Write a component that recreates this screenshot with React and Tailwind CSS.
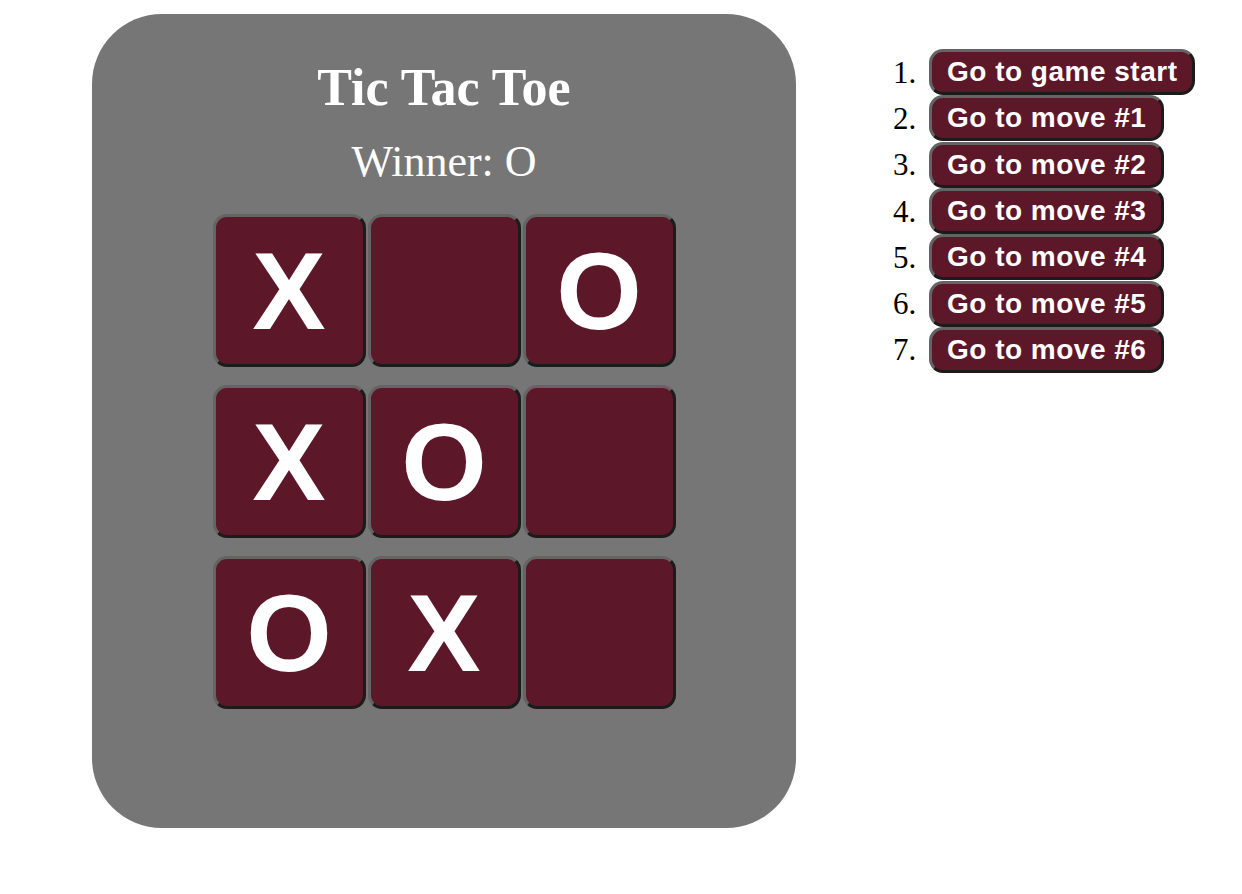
import React from 'react';

const board = ['X', null, 'O', 'X', 'O', null, 'O', 'X', null];
const moves = ['Go to game start', 'Go to move #1', 'Go to move #2', 'Go to move #3', 'Go to move #4', 'Go to move #5', 'Go to move #6'];

function Square({ value }) {
  return (
    <button className="w-[153px] h-[153px] rounded-[14px] bg-[#5c1729] border-[3px] border-t-[#646464] border-l-[#646464] border-b-[#1b1b1b] border-r-[#1b1b1b] flex items-center justify-center text-white font-bold text-[110px] leading-none font-['Liberation_Sans',Arial,sans-serif]">
      {value}
    </button>
  );
}

export default function App() {
  const rows = [board.slice(0, 3), board.slice(3, 6), board.slice(6, 9)];

  return (
    <div className="flex items-start pl-[92px] pt-[14px] gap-[97px] bg-white min-h-[894px] font-['Liberation_Serif','Times_New_Roman',serif]">
      {/* Game panel */}
      <div className="w-[704px] h-[814px] rounded-[70px] bg-[#767676] flex flex-col items-center text-white">
        <h1 className="mt-[44px] text-[52px] font-bold leading-[60px]">Tic Tac Toe</h1>
        <div className="mt-[19px] text-[44px] leading-[50px]">Winner: O</div>
        <div className="mt-[27px] flex flex-col gap-[18px]">
          {rows.map((row, r) => (
            <div key={r} className="flex gap-[2px]">
              {row.map((v, c) => (
                <Square key={c} value={v} />
              ))}
            </div>
          ))}
        </div>
      </div>

      {/* Move history */}
      <ol className="mt-[35px] flex flex-col">
        {moves.map((m, i) => (
          <li key={i} className="flex items-center h-[46.3px]">
            <span className="w-[36px] text-[31px] text-black leading-none">{i + 1}.</span>
            <button className="h-[46px] px-[15px] rounded-[14px] bg-[#5c1729] border-[3px] border-t-[#646464] border-l-[#646464] border-b-[#1b1b1b] border-r-[#1b1b1b] text-white font-bold text-[28px] tracking-[0.5px] leading-none font-['Liberation_Sans',Arial,sans-serif]">
              {m}
            </button>
          </li>
        ))}
      </ol>
    </div>
  );
}
